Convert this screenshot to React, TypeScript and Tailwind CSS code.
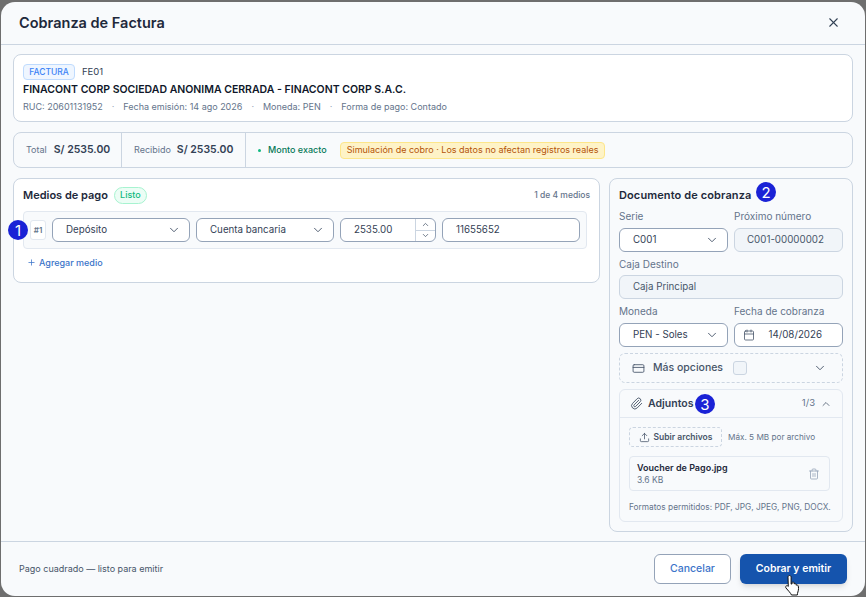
import { Calendar, ChevronDown, ChevronUp, CreditCard, Paperclip, Plus, Trash2, Upload, X } from 'lucide-react';
import type { ReactNode } from 'react';

const FIELD = 'flex items-center h-6 rounded-md border text-[9.75px] text-[#334155]';

function Marker({ n, className }: { n: number; className: string }) {
  return (
    <span className={`absolute flex h-5 w-5 items-center justify-center rounded-full bg-[#1a22d6] text-[15px] leading-none text-white ${className}`}>
      {n}
    </span>
  );
}

function SelectBox({ label, className }: { label: string; className: string }) {
  return (
    <div className={`${FIELD} justify-between border-[#94a3b8] bg-white pl-[13px] pr-2 ${className}`}>
      <span>{label}</span>
      <ChevronDown className="h-[14px] w-[14px] text-[#475569]" strokeWidth={1.6} />
    </div>
  );
}

function Label({ children, className }: { children: ReactNode; className: string }) {
  return <div className={`text-[10px] leading-[13px] text-[#64748b] ${className}`}>{children}</div>;
}

function Dot() {
  return <span className="text-[#94a3b8]">·</span>;
}

export default function App() {
  return (
    <div className="h-[597px] w-[866px] overflow-hidden bg-[#6e6e6e] pb-px pl-px pr-px pt-[2px] font-['Inter',sans-serif]">
      <div className="flex h-full flex-col rounded-[14px] bg-[#f8fafc]">
        <header className="flex h-[43px] shrink-0 items-center justify-between border-b border-[#cbd5e1] pb-px pl-[18px] pr-[24px]">
          <h2 className="text-[14.5px] font-semibold text-[#1e293b]">Cobranza de Factura</h2>
          <X className="h-[15px] w-[15px] text-[#334155]" strokeWidth={1.7} />
        </header>

        <div className="flex min-h-0 flex-1 flex-col gap-[10px] px-3 pt-[9px]">
          <section className="h-[68px] rounded-lg border border-[#cbd5e1] bg-white px-[9px] pt-[9px]">
            <div className="flex h-4 items-center gap-[7px]">
              <span className="flex h-4 w-[52px] items-center justify-center rounded border border-[#bfdbfe] bg-[#eff6ff] text-[8.5px] font-medium text-[#3b82f6]">FACTURA</span>
              <span className="text-[9.5px] text-[#334155]">FE01</span>
            </div>
            <div className="mt-[3px] text-[10.5px] font-semibold leading-[14px] text-[#0f172a]">FINACONT CORP SOCIEDAD ANONIMA CERRADA - FINACONT CORP S.A.C.</div>
            <div className="mt-[4px] flex gap-[9px] text-[9px] leading-3 text-[#64748b]">
              <span>RUC: 20601131952</span>
              <Dot />
              <span>Fecha emisión: 14 ago 2026</span>
              <Dot />
              <span>Moneda: PEN</span>
              <Dot />
              <span>Forma de pago: Contado</span>
            </div>
          </section>

          <section className="flex h-[36px] items-center rounded-lg border border-[#cbd5e1] bg-[#f8fafc]">
            <div className="flex h-full w-[108px] items-center gap-[7px] border-r border-[#cbd5e1] pl-3">
              <span className="text-[9px] text-[#64748b]">Total</span>
              <span className="text-[10.5px] font-semibold text-[#334155]">S/ 2535.00</span>
            </div>
            <div className="flex h-full w-[124px] items-center gap-[6px] border-r border-[#cbd5e1] pl-3">
              <span className="text-[9px] text-[#64748b]">Recibido</span>
              <span className="text-[10.5px] font-semibold text-[#334155]">S/ 2535.00</span>
            </div>
            <div className="ml-3 flex items-center">
              <span className="h-[3px] w-[3px] rounded-full bg-[#10b981]" />
              <span className="ml-[7px] text-[9px] font-medium text-[#047857]">Monto exacto</span>
              <span className="ml-[13px] flex h-[17px] items-center rounded border border-[#fde68a] bg-[#fef3c7] px-[6px] text-[9px] text-[#b45309]">
                Simulación de cobro · Los datos no afectan registros reales
              </span>
            </div>
          </section>

          <div className="flex items-start gap-[9px]">
            <section className="relative h-[105px] w-[587px] rounded-lg border border-[#cbd5e1] bg-white px-[9px]">
              <div className="flex h-[32px] items-center justify-between">
                <div className="flex items-center gap-[6px]">
                  <h3 className="text-[11px] font-semibold text-[#1e293b]">Medios de pago</h3>
                  <span className="flex h-[17px] w-[33px] items-center justify-center rounded-full border border-[#a7f3d0] bg-[#ecfdf5] text-[9px] font-medium text-[#10b981]">Listo</span>
                </div>
                <span className="text-[8.5px] font-medium text-[#64748b]">1 de 4 medios</span>
              </div>
              <div className="flex h-[38px] w-[564px] items-center gap-[6px] rounded border border-[#e2e8f0] bg-[#f8fafc] pl-[6px]">
                <span className="flex h-5 w-4 items-center justify-center rounded-[3px] border border-[#e2e8f0] bg-white text-[8px] font-semibold text-[#64748b]">#1</span>
                <SelectBox label="Depósito" className="w-[138px]" />
                <SelectBox label="Cuenta bancaria" className="w-[138px]" />
                <div className={`${FIELD} w-[96px] border-[#94a3b8] bg-white pl-[13px]`}>
                  <span className="flex-1">2535.00</span>
                  <div className="flex h-full w-5 flex-col border-l border-[#cbd5e1]">
                    <div className="flex flex-1 items-center justify-center border-b border-[#cbd5e1]"><ChevronUp className="h-[9px] w-[9px] text-[#475569]" /></div>
                    <div className="flex flex-1 items-center justify-center"><ChevronDown className="h-[9px] w-[9px] text-[#475569]" /></div>
                  </div>
                </div>
                <div className={`${FIELD} w-[138px] border-[#94a3b8] bg-white pl-[13px]`}>11655652</div>
              </div>
              <div className="mt-[7px] flex items-center gap-[3px] pl-[4px] text-[9px] font-medium text-[#3b74c9]">
                <Plus className="h-[9px] w-[9px]" strokeWidth={2} />
                Agregar medio
              </div>
              <Marker n={1} className="left-[-6px] top-[41px]" />
            </section>

            <section className="h-[354px] w-[244px] rounded-lg border border-[#cbd5e1] bg-[#f8fafc] px-[9px]">
              <div className="relative h-[31px] pt-[9px]">
                <h3 className="text-[11px] font-semibold leading-[14px] tracking-[0.01em] text-[#1e293b]">Documento de cobranza</h3>
                <Marker n={2} className="left-[137px] top-[3px]" />
              </div>
              <div className="grid grid-cols-2 gap-x-[6px]">
                <div>
                  <Label className="mb-[5px]">Serie</Label>
                  <SelectBox label="C001" className="h-6" />
                </div>
                <div>
                  <Label className="mb-[5px]">Próximo número</Label>
                  <div className={`${FIELD} border-[#cbd5e1] bg-[#f1f5f9] pl-[12px] text-[#475569]`}>C001-00000002</div>
                </div>
              </div>
              <div className="mt-[6px]">
                <Label className="mb-[4px]">Caja Destino</Label>
                <div className={`${FIELD} border-[#cbd5e1] bg-[#f1f5f9] pl-[13px] text-[#475569]`}>Caja Principal</div>
              </div>
              <div className="mt-[6px] grid grid-cols-2 gap-x-[6px]">
                <div>
                  <Label className="mb-[5px]">Moneda</Label>
                  <SelectBox label="PEN - Soles" className="h-6" />
                </div>
                <div>
                  <Label className="mb-[5px]">Fecha de cobranza</Label>
                  <div className={`${FIELD} justify-between border-[#94a3b8] bg-white pl-2 pr-[20px]`}>
                    <Calendar className="h-3 w-3 text-[#475569]" strokeWidth={1.6} />
                    <span>14/08/2026</span>
                  </div>
                </div>
              </div>
              <div className="mt-[6px] flex h-[30px] items-center rounded-md border border-dashed border-[#cbd5e1] pl-3 pr-[15px]">
                <CreditCard className="h-[13px] w-[13px] text-[#475569]" strokeWidth={1.6} />
                <span className="ml-2 text-[10.5px] font-medium text-[#475569]">Más opciones</span>
                <span className="ml-[10px] h-[14px] w-[14px] rounded-[3px] border border-[#cbd5e1] bg-[#f1f5f9]" />
                <ChevronDown className="ml-auto h-[14px] w-[14px] text-[#475569]" strokeWidth={1.6} />
              </div>
              <div className="mt-[6px] h-[133px] rounded-md border border-[#e2e8f0] bg-[#f8fafc]">
                <div className="relative flex h-[28px] items-center border-b border-[#e2e8f0] px-[10px]">
                  <Paperclip className="h-[13px] w-[13px] text-[#475569]" strokeWidth={1.7} />
                  <span className="ml-[5px] text-[10.5px] font-semibold text-[#334155]">Adjuntos</span>
                  <Marker n={3} className="left-[75px] top-[4px]" />
                  <span className="ml-auto text-[9.5px] text-[#64748b]">1/3</span>
                  <ChevronUp className="ml-[5px] h-3 w-3 text-[#475569]" strokeWidth={1.6} />
                </div>
                <div className="px-[9px] pt-[9px]">
                  <div className="flex items-center gap-[6px]">
                    <div className="flex h-5 w-[93px] items-center justify-center gap-[4px] rounded border border-dashed border-[#cbd5e1] text-[8.5px] font-semibold text-[#475569]">
                      <Upload className="h-[11px] w-[11px]" strokeWidth={1.7} />
                      Subir archivos
                    </div>
                    <span className="text-[8.2px] text-[#64748b]">Máx. 5 MB por archivo</span>
                  </div>
                  <div className="mt-[9px] flex h-[35px] w-[201px] items-center justify-between rounded border border-[#e2e8f0] bg-[#f8fafc] pl-[7px] pr-[9px]">
                    <div>
                      <div className="text-[9px] font-semibold leading-[12px] text-[#1e293b]">Voucher de Pago.jpg</div>
                      <div className="text-[8.5px] leading-[12px] text-[#64748b]">3.6 KB</div>
                    </div>
                    <Trash2 className="h-3 w-3 text-[#94a3b8]" strokeWidth={1.6} />
                  </div>
                  <div className="mt-[10px] whitespace-nowrap text-[8.3px] text-[#64748b]">Formatos permitidos: PDF, JPG, JPEG, PNG, DOCX.</div>
                </div>
              </div>
            </section>
          </div>
        </div>

        <footer className="relative flex h-[55px] shrink-0 items-center justify-between border-t border-[#cbd5e1] px-[18px]">
          <span className="text-[9px] text-[#475569]">Pago cuadrado — listo para emitir</span>
          <div className="flex items-center gap-[9px]">
            <button type="button" className="h-[30px] w-[77px] rounded-md border border-[#94a3b8] bg-white text-[10.5px] font-medium text-[#3b74c9]">Cancelar</button>
            <button type="button" className="h-[30px] w-[107px] rounded-md bg-[#1554ad] text-[10.5px] font-semibold text-white shadow-md">Cobrar y emitir</button>
          </div>
          <svg className="absolute left-[783px] top-[32px]" width="21" height="24" viewBox="0 0 20 24">
            <path
              d="M5 1.5c1 0 1.6.7 1.6 1.600v7l1-.3V8.500c.6-.6 1.600-.5 2 .2v1.200c.6-.5 1.600-.4 2 .3v1c.7-.4 1.600-.2 2 .5.6 1.300.6 4-.2 6.300-.3 1-.6 2-.6 3H7c-.4-1-1.200-2-2.200-3.200L1.500 14c-.6-.8-.4-1.700.3-2.100.7-.4 1.500-.1 2 .5l-.3-9.300C3.500 2.200 4 1.500 5 1.500Z"
              fill="#fff"
              stroke="#111"
              strokeWidth="1"
              strokeLinejoin="round"
            />
          </svg>
        </footer>
      </div>
    </div>
  );
}
